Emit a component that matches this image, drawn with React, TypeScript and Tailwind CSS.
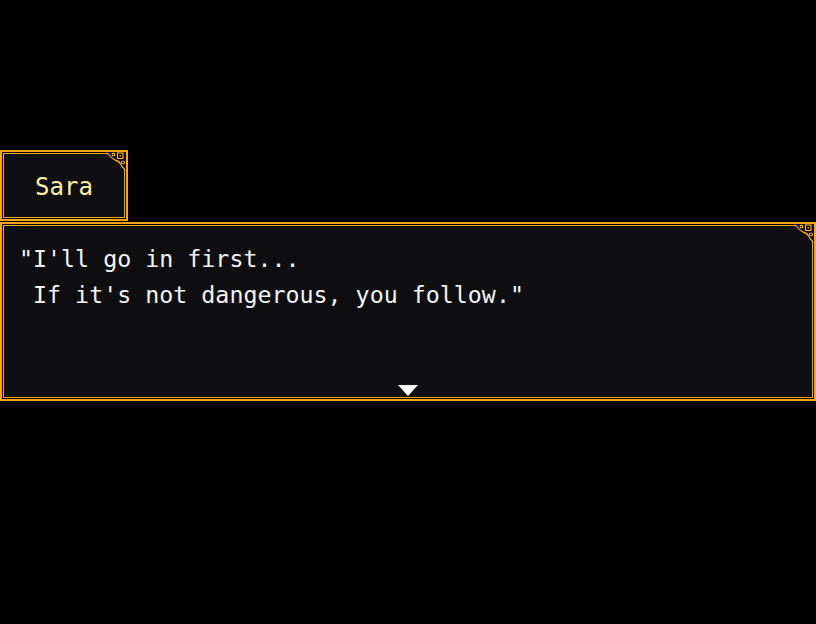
const gold = "#f7a51a";

// little filigree drawn over the top-right corner of each window
function Corner() {
  return (
    <svg width="20" height="20" viewBox="0 0 20 20" className="absolute top-0 right-0" fill="none">
      <path d="M2 0 L2 1.5 Q5 6 9 8 Q13 9 14.5 12 Q16 15 18.5 17 L20 17 L20 0 Z" fill="#000" />
      <path d="M0 1.5 L2 1.5 Q5 6 9 8 Q13 9 14.5 12 Q16 15 18.5 17 L18.5 20" stroke={gold} strokeWidth="1.3" />
      <circle cx="7.5" cy="2.5" r="1.4" stroke={gold} strokeWidth="1.2" />
      <rect x="11.5" y="1" width="5.5" height="5.5" stroke={gold} strokeWidth="1.2" />
      <rect x="13.5" y="3" width="1.5" height="1.5" fill={gold} />
      <circle cx="17" cy="10.5" r="1.5" stroke={gold} strokeWidth="1.2" />
    </svg>
  );
}

export default function App() {
  return (
    <div className="w-[816px] h-[624px] bg-black pt-[150px] flex flex-col gap-[1px] font-['DejaVu_Sans_Mono',monospace]">
      <div className="relative w-[128px] h-[71px] border-2 border-[#f7a51a] p-[1px] bg-black">
        <div className="h-full border border-[#f7a51a] bg-[#0f0f12] flex items-center justify-center">
          <span className="text-[24px] text-[#fbf2a2] leading-none pt-[2px]">Sara</span>
        </div>
        <Corner />
      </div>

      <div className="relative w-[816px] h-[179px] border-2 border-[#f7a51a] p-[1px] bg-black">
        <div className="h-full border border-[#f7a51a] bg-[#0f0f12] flex flex-col">
          <div className="pl-[15px] pt-[15px] text-[23.3px] leading-[36px] text-[#f4f4f4] whitespace-pre">
            <div>"I'll go in first...</div>
            <div> If it's not dangerous, you follow."</div>
          </div>
          <div className="mt-auto mb-[1px] self-center w-0 h-0 border-l-[10px] border-r-[10px] border-t-[11px] border-l-transparent border-r-transparent border-t-white" />
        </div>
        <Corner />
      </div>
    </div>
  );
}
